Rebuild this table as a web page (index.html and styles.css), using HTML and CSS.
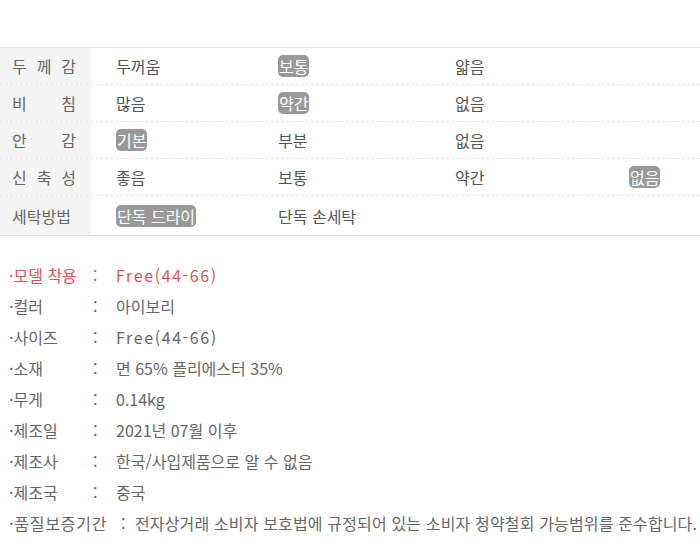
FILE: index.html
```html
<!DOCTYPE html>
<html lang="ko">
<head>
<meta charset="utf-8">
<link rel="stylesheet" href="styles.css">
</head>
<body>
<div class="spec">
  <div class="row">
    <div class="label"><span>두</span><span>께</span><span>감</span></div>
    <div class="cell">두꺼움</div>
    <div class="cell"><span class="on">보통</span></div>
    <div class="cell">얇음</div>
    <div class="cell"></div>
  </div>
  <div class="row">
    <div class="label"><span>비</span><span>침</span></div>
    <div class="cell">많음</div>
    <div class="cell"><span class="on">약간</span></div>
    <div class="cell">없음</div>
    <div class="cell"></div>
  </div>
  <div class="row">
    <div class="label"><span>안</span><span>감</span></div>
    <div class="cell"><span class="on">기본</span></div>
    <div class="cell">부분</div>
    <div class="cell">없음</div>
    <div class="cell"></div>
  </div>
  <div class="row">
    <div class="label"><span>신</span><span>축</span><span>성</span></div>
    <div class="cell">좋음</div>
    <div class="cell">보통</div>
    <div class="cell">약간</div>
    <div class="cell"><span class="on">없음</span></div>
  </div>
  <div class="row last">
    <div class="label"><span>세탁방법</span></div>
    <div class="cell"><span class="on">단독 드라이</span></div>
    <div class="cell">단독 손세탁</div>
    <div class="cell"></div>
    <div class="cell"></div>
  </div>
</div>

<ul class="info">
  <li class="red"><span class="k">·모델 착용</span><span class="c">:</span><span class="v latin">Free(44-66)</span></li>
  <li><span class="k">·컬러</span><span class="c">:</span><span class="v">아이보리</span></li>
  <li><span class="k">·사이즈</span><span class="c">:</span><span class="v latin">Free(44-66)</span></li>
  <li><span class="k">·소재</span><span class="c">:</span><span class="v">면 65% 폴리에스터 35%</span></li>
  <li><span class="k">·무게</span><span class="c">:</span><span class="v">0.14kg</span></li>
  <li><span class="k">·제조일</span><span class="c">:</span><span class="v">2021년 07월 이후</span></li>
  <li><span class="k">·제조사</span><span class="c">:</span><span class="v">한국/사입제품으로 알 수 없음</span></li>
  <li><span class="k">·제조국</span><span class="c">:</span><span class="v">중국</span></li>
  <li class="long"><span class="k">·품질보증기간</span><span class="c">:</span><span class="v">전자상거래 소비자 보호법에 규정되어 있는 소비자 청약철회 가능범위를 준수합니다.</span></li>
</ul>
</body>
</html>
```
FILE: styles.css
```css
* { box-sizing: border-box; }
html, body { margin: 0; padding: 0; background: #fff; }
body {
  font-family: "Noto Sans CJK KR", "Noto Sans", sans-serif;
  color: #666;
  width: 700px;
  overflow: hidden;
}
.spec {
  margin-top: 47px;
  border-top: 1px solid #e3e3e3;
  border-bottom: 1px solid #e3e3e3;
}
.row {
  display: grid;
  grid-template-columns: 91px 162px 177px 174px 96px;
  height: 37px;
  border-bottom: 1px dashed #e8e8e8;
}
.row.last { border-bottom: none; height: 39px; }
.label {
  background: #f4f4f4;
  font-size: 16px;
  color: #666;
  display: flex;
  align-items: center;
  justify-content: space-between;
  padding-left: 12px;
  padding-right: 15px;
  white-space: nowrap;
}
.cell {
  display: flex;
  align-items: center;
  padding-left: 25px;
  font-size: 16px;
  color: #555;
  white-space: nowrap;
}
.on {
  background: #999;
  color: #fff;
  border-radius: 5px;
  padding: 0 1px;
  line-height: 22px;
}
.info {
  list-style: none;
  margin: 24px 0 0;
  padding: 0 0 0 9px;
  font-size: 16px;
  color: #666;
}
.info li {
  display: flex;
  line-height: 31px;
  white-space: nowrap;
}
.info .k { width: 84px; }
.info .c { width: 23px; }
.info .latin { letter-spacing: 1.6px; }
.info li.long .k { width: 112px; letter-spacing: 0.8px; }
.info li.long .c { width: 14px; }
.info li.long .v { letter-spacing: 0.15px; }
.info li.red { color: #dd5656; }
```
